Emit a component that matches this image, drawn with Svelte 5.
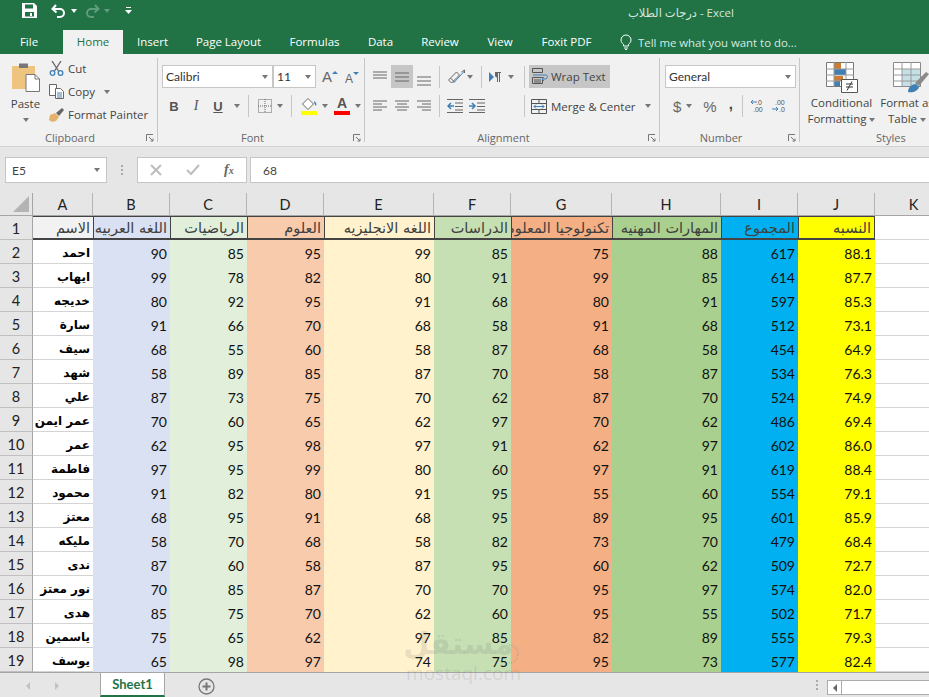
<script>
  const tabs = [
    { name: 'File', width: 63 },
    { name: 'Home', width: 60, active: true },
    { name: 'Insert', width: 59 },
    { name: 'Page Layout', width: 93 },
    { name: 'Formulas', width: 79 },
    { name: 'Data', width: 53 },
    { name: 'Review', width: 66 },
    { name: 'View', width: 54 },
    { name: 'Foxit PDF', width: 79 }
  ];

  const columns = ['A', 'B', 'C', 'D', 'E', 'F', 'G', 'H', 'I', 'J', 'K'];
  const headers = [
    'الاسم', 'اللغه العربيه', 'الرياضيات', 'العلوم', 'اللغه الانجليزيه',
    'الدراسات', 'تكنولوجيا المعلومات', 'المهارات المهنيه', 'المجموع', 'النسبه'
  ];

  const students = [
    ['احمد', 90, 85, 95, 99, 85, 75, 88, 617, 88.1],
    ['ايهاب', 99, 78, 82, 80, 91, 99, 85, 614, 87.7],
    ['خديجه', 80, 92, 95, 91, 68, 80, 91, 597, 85.3],
    ['سارة', 91, 66, 70, 68, 58, 91, 68, 512, 73.1],
    ['سيف', 68, 55, 60, 58, 87, 68, 58, 454, 64.9],
    ['شهد', 58, 89, 85, 87, 70, 58, 87, 534, 76.3],
    ['علي', 87, 73, 75, 70, 62, 87, 70, 524, 74.9],
    ['عمر ايمن', 70, 60, 65, 62, 97, 70, 62, 486, 69.4],
    ['عمر', 62, 95, 98, 97, 91, 62, 97, 602, 86.0],
    ['فاطمة', 97, 95, 99, 80, 60, 97, 91, 619, 88.4],
    ['محمود', 91, 82, 80, 91, 95, 55, 60, 554, 79.1],
    ['معتز', 68, 95, 91, 68, 95, 89, 95, 601, 85.9],
    ['مليكه', 58, 70, 68, 58, 82, 73, 70, 479, 68.4],
    ['ندى', 87, 60, 58, 87, 95, 60, 62, 509, 72.7],
    ['نور معتز', 70, 85, 87, 70, 70, 95, 97, 574, 82.0],
    ['هدى', 85, 75, 70, 62, 60, 95, 55, 502, 71.7],
    ['ياسمين', 75, 65, 62, 97, 85, 82, 89, 555, 79.3],
    ['يوسف', 65, 98, 97, 74, 75, 95, 73, 577, 82.4]
  ];

  function show(value, index) {
    return index === 9 ? value.toFixed(1) : value;
  }
</script>

{#snippet caret()}
  <span class="caret"></span>
{/snippet}

{#snippet launcher()}
  <svg class="launcher" width="8" height="8" viewBox="0 0 8 8" fill="none" stroke="#777">
    <path d="M.5 7V.5H7" /><path d="M3 3l4 4M7 4.500V7H4.500" />
  </svg>
{/snippet}

{#snippet alignLines(ys, xs)}
  <svg width="16" height="20" viewBox="0 0 16 20" stroke="#666" stroke-width="1">
    {#each ys as y, i}
      <line x1={xs[i % xs.length][0]} x2={xs[i % xs.length][1]} y1={y} y2={y} />
    {/each}
  </svg>
{/snippet}

<div class="window">
  <header class="titlebar">
    <div class="quick">
      <svg class="save" width="15" height="15" viewBox="0 0 15 15">
        <path fill="#fff" d="M0 0h12l3 3v12H0z" />
        <path fill="#217346" d="M3 1.500h8v4H3zM3 9h9v4.500H3z" />
        <path fill="#fff" d="M8 10h2v3H8z" />
      </svg>
      <svg class="undo" width="15" height="14" viewBox="0 0 15 14" fill="none" stroke="#fff" stroke-width="2">
        <path d="M5 1L1.500 5 5.500 8.500" /><path d="M2 5h7a4 4 0 0 1 0 8H6" />
      </svg>
      <span class="caret white"></span>
      <svg class="redo" width="15" height="14" viewBox="0 0 15 14" fill="none" stroke="#5f9c7d" stroke-width="2">
        <path d="M10 1l3.500 4-4 3.500" /><path d="M13 5H6a4 4 0 0 0 0 8h3" />
      </svg>
      <span class="caret dim"></span>
      <svg class="customize" width="7" height="8" viewBox="0 0 7 8" fill="#fff">
        <path d="M1 0h5v1H1zM0 3h7L3.500 7z" />
      </svg>
    </div>
    <div class="doc-title">درجات الطلاب - Excel</div>
  </header>

  <nav class="tabs">
    {#each tabs as tab}
      <div class="tab" class:active={tab.active} style="width: {tab.width}px">{tab.name}</div>
    {/each}
    <div class="tell">
      <svg width="12" height="16" viewBox="0 0 12 16" fill="none" stroke="#fff">
        <path d="M3.500 10.500C2 9 1 7.800 1 6a5 5 0 0 1 10 0c0 1.800-1 3-2.500 4.500V12h-5zM4 14h4M5 15.500h2" />
      </svg>
      <span>Tell me what you want to do...</span>
    </div>
  </nav>

  <section class="ribbon">
    <div class="group clipboard">
      <div class="group-body clip-body">
        <div class="paste">
          <svg width="30" height="30" viewBox="0 0 30 30">
            <path fill="#efc47f" d="M1 4h23v23H1z" />
            <path fill="#777" d="M8 1.500h9V6H8z" />
            <path fill="#fff" stroke="#777" d="M15 12.500h9l4.500 4.500v12.500H15z" />
            <path fill="none" stroke="#777" d="M24 12.500V17h4.500" />
          </svg>
          <span>Paste</span>
          {@render caret()}
        </div>
        <div class="clip-actions">
          <div class="clip-row">
            <svg width="15" height="15" viewBox="0 0 15 15" fill="none">
              <path stroke="#666" stroke-width="1.300" d="M3 0l6.500 10M12 0L5.500 10" />
              <circle cx="3.500" cy="12" r="2.300" stroke="#3f7fb5" stroke-width="1.300" />
              <circle cx="11.500" cy="12" r="2.300" stroke="#3f7fb5" stroke-width="1.300" />
            </svg>
            <span>Cut</span>
          </div>
          <div class="clip-row">
            <svg width="15" height="15" viewBox="0 0 15 15" fill="#fff" stroke="#666">
              <path d="M.5.500h7v11h-7z" /><path d="M6.500 4.500h5l3 3v7h-8z" />
              <path stroke="#3f7fb5" d="M8 9h5M8 11h5M8 13h5" />
            </svg>
            <span>Copy</span>
            {@render caret()}
          </div>
          <div class="clip-row">
            <svg width="15" height="15" viewBox="0 0 15 15">
              <path fill="#e4b26d" d="M0 13l1-5 5-2 4 4-3 4-4 1z" />
              <path fill="#666" d="M7 6l6-5 2 2-5 6z" />
            </svg>
            <span>Format Painter</span>
          </div>
        </div>
      </div>
      <div class="group-foot"><i></i><span class="foot-label">Clipboard</span>{@render launcher()}</div>
    </div>

    <div class="group font">
      <div class="group-body">
        <div class="row first">
          <div class="select font-name"><span>Calibri</span>{@render caret()}</div>
          <div class="select font-size"><span>11</span>{@render caret()}</div>
          <div class="grow-btn big">A<b class="up"></b></div>
          <div class="grow-btn small">A<b class="down"></b></div>
        </div>
        <div class="row second">
          <span class="fmt bold">B</span>
          <span class="fmt italic">I</span>
          <span class="fmt under">U</span>
          {@render caret()}
          <span class="sep"></span>
          <svg class="borders" width="14" height="14" viewBox="0 0 14 14" fill="none" stroke="#666" stroke-dasharray="1 1">
            <path d="M.5.500h13v13H.5zM7 0v14M0 7h14" />
          </svg>
          {@render caret()}
          <span class="sep"></span>
          <div class="swatch">
            <svg width="16" height="12" viewBox="0 0 16 12">
              <path fill="#fff" stroke="#666" d="M1.500 6L7 .5 12.500 6 7 11.500z" />
              <path fill="#3f7fb5" d="M13 3c2 1 3 3 2 5-1-1-2-3-2-5z" />
            </svg>
            <b class="bar yellow"></b>
          </div>
          {@render caret()}
          <div class="swatch color-a">
            <span>A</span>
            <b class="bar red"></b>
          </div>
          {@render caret()}
        </div>
      </div>
      <div class="group-foot"><i></i><span class="foot-label">Font</span>{@render launcher()}</div>
    </div>

    <div class="group alignment">
      <div class="group-body">
        <div class="row first">
          <span class="tool">{@render alignLines([5, 8, 11], [[1, 15]])}</span>
          <span class="tool on">{@render alignLines([6, 10, 14], [[1, 15]])}</span>
          <span class="tool">{@render alignLines([10, 14, 18], [[1, 15]])}</span>
          <span class="sep"></span>
          <span class="orient">
            <svg width="19" height="16" viewBox="0 0 18 16" fill="none" stroke="#666">
              <path d="M1 11l8-8 3 3-8 8zM3 9l4 4M14 3l3-2v3" /><path stroke="#3f7fb5" d="M6 14L17 2" />
            </svg>
            {@render caret()}
          </span>
          <span class="sep"></span>
          <span class="rtl">
            <svg width="12" height="10" viewBox="0 0 12 10"><path fill="#3f7fb5" d="M0 0l5 5-5 5z" /><path fill="#666" d="M6 0h6v1h-1v9h-1V1H9v9H8V5.500C6.500 5.500 6 4 6 3z" /></svg>
            {@render caret()}
          </span>
          <span class="sep"></span>
          <div class="wrap-text">
            <svg width="16" height="17" viewBox="0 0 16 17" fill="none" stroke="#555">
              <path d="M.5.500h10v4H.5zM.5 9.500h10v6H.5zM2 12h7M2 14h7" />
              <path stroke="#3f7fb5" d="M1 7h13c2 0 2 4-1 4h-2M12 9l-2 2 2 2" />
            </svg>
            <span>Wrap Text</span>
          </div>
        </div>
        <div class="row second">
          <span class="tool">{@render alignLines([5, 8, 11, 14], [[1, 15], [1, 10]])}</span>
          <span class="tool">{@render alignLines([5, 8, 11, 14], [[1, 15], [3, 13]])}</span>
          <span class="tool">{@render alignLines([5, 8, 11, 14], [[1, 15], [6, 15]])}</span>
          <span class="sep"></span>
          <span class="tool indent">
            <svg width="16" height="14" viewBox="0 0 16 14" fill="none" stroke="#666">
              <path d="M0 .5h16M8 4h8M8 7.500h8M8 11h8M0 13.500h16" />
              <path stroke="#3f7fb5" stroke-width="1.500" d="M7 7H1M4 4L1 7l3 3" />
            </svg>
          </span>
          <span class="tool indent">
            <svg width="16" height="14" viewBox="0 0 16 14" fill="none" stroke="#666">
              <path d="M0 .5h16M8 4h8M8 7.500h8M8 11h8M0 13.500h16" />
              <path stroke="#3f7fb5" stroke-width="1.500" d="M0 7h6M3 4l3 3-3 3" />
            </svg>
          </span>
          <span class="sep wide"></span>
          <div class="merge">
            <svg width="16" height="15" viewBox="0 0 16 15" fill="none" stroke="#555">
              <path d="M.5.500h15v14H.5zM0 4.500h16M0 10.500h16M8 0v4M8 11v4" />
              <path stroke="#3f7fb5" d="M3 7.500h10M5 5.500l-2 2 2 2M11 5.500l2 2-2 2" />
            </svg>
            <span>Merge &amp; Center</span>
            {@render caret()}
          </div>
        </div>
      </div>
      <div class="group-foot"><i></i><span class="foot-label">Alignment</span>{@render launcher()}</div>
    </div>

    <div class="group number">
      <div class="group-body">
        <div class="row first"><div class="select general"><span>General</span>{@render caret()}</div></div>
        <div class="row second">
          <span class="cur">$</span>
          {@render caret()}
          <span class="pct">%</span>
          <span class="comma">,</span>
          <span class="sep"></span>
          <svg class="dec" width="15" height="14" viewBox="0 0 15 14">
            <text x="6" y="6" font-size="7">.0</text><text x="3" y="13" font-size="7">.00</text>
            <path stroke="#3f7fb5" fill="none" d="M7 3H1M3 1L1 3l2 2" />
          </svg>
          <svg class="dec" width="15" height="14" viewBox="0 0 15 14">
            <text x="3" y="6" font-size="7">.00</text><text x="7" y="13" font-size="7">.0</text>
            <path stroke="#3f7fb5" fill="none" d="M0 10h6M4 8l2 2-2 2" />
          </svg>
        </div>
      </div>
      <div class="group-foot"><i></i><span class="foot-label">Number</span>{@render launcher()}</div>
    </div>

    <div class="group styles">
      <div class="group-body style-body">
        <div class="big-tool cond">
          <svg width="32" height="31" viewBox="0 0 32 31">
            <path fill="#fff" stroke="#777" d="M.5.500h27v24H.5z" />
            <path fill="#c97c32" d="M8 1h7v6H8zM8 14h9v5H8z" />
            <path fill="#3f7fb5" d="M8 7h12v6H8zM8 19h6v5H8z" />
            <path stroke="#999" fill="none" d="M8 0v25M20 0v25M0 7h28M0 13h28M0 19h28" />
            <path fill="#fff" stroke="#555" d="M15.500 17.500h16v13h-16z" />
            <path stroke="#333" fill="none" d="M20 22h7M20 25h7M26 19.500l-5 9" />
          </svg>
          <span>Conditional</span>
          <span>Formatting {@render caret()}</span>
        </div>
        <div class="big-tool table">
          <svg width="37" height="31" viewBox="0 0 37 31">
            <path fill="#fff" stroke="#888" d="M.5.500h27v24H.5z" />
            <path fill="#c5dfe6" d="M9 7h18v17H9z" />
            <path stroke="#999" fill="none" d="M9 0v25M18 0v25M0 7h28M0 13h28M0 19h28" />
            <path fill="#8a8a8a" d="M22 21l11-11 3 2-10 12z" />
            <path fill="#3f7fb5" d="M15 30c0-5 4-8 8-8l3 3c-1 4-6 6-11 5z" />
          </svg>
          <span>Format as</span>
          <span>Table {@render caret()}</span>
        </div>
      </div>
      <div class="group-foot styles-foot"><span>Styles</span></div>
    </div>
  </section>

  <section class="formula-bar">
    <div class="name-box"><span>E5</span>{@render caret()}</div>
    <div class="grip"><i></i><i></i><i></i></div>
    <div class="fx-box">
      <svg width="12" height="12" viewBox="0 0 12 12" stroke="#bdbdbd" stroke-width="2"><path d="M1 1l10 10M11 1L1 11" /></svg>
      <svg width="14" height="12" viewBox="0 0 14 12" fill="none" stroke="#bdbdbd" stroke-width="2"><path d="M1 6l4 4 8-9" /></svg>
      <span class="fx">f<small>x</small></span>
    </div>
    <div class="formula-input">68</div>
  </section>

  <section class="sheet">
    <div class="corner"><svg width="16" height="16" viewBox="0 0 16 16"><path fill="#b4b4b4" d="M16 0v16H0z" /></svg></div>
    {#each columns as col}
      <div class="col-head">{col}</div>
    {/each}

    <div class="row-head">1</div>
    {#each headers as text, i}
      <div class="cell title c{i}"><span>{text}</span></div>
    {/each}
    <div class="cell blank"></div>

    {#each students as student, r}
      <div class="row-head">{r + 2}</div>
      {#each student as value, i}
        <div class="cell c{i}" class:name={i === 0}>{i === 0 ? value : show(value, i)}</div>
      {/each}
      <div class="cell blank"></div>
    {/each}
  </section>

  <footer class="sheet-tabs">
    <span class="nav-arrow left"></span>
    <span class="nav-arrow right"></span>
    <div class="sheet-tab">Sheet1</div>
    <svg class="add" width="17" height="17" viewBox="0 0 17 17" fill="none" stroke="#777">
      <circle cx="8.500" cy="8.500" r="7.500" stroke-width="1.300" /><path stroke-width="2" d="M4.500 8.500h8M8.500 4.500v8" />
    </svg>
    <div class="grip foot-grip"><i></i><i></i><i></i></div>
    <div class="hscroll"><span class="scroll-btn"><b></b></span></div>
  </footer>

  <div class="watermark">
    <span class="mark-ar">مستقل</span>
    <span class="mark-en">mostaql.com</span>
    <svg class="mark-ring" width="12" height="20" viewBox="0 0 12 20" fill="none" stroke="#8a8a8a" stroke-width="2" stroke-dasharray="1 1.500">
      <path d="M2 1a9 9 0 0 1 0 18" />
    </svg>
  </div>
</div>

<style>
  :global(body) {
    margin: 0;
    background: #e6e6e6;
  }

  .window {
    position: relative;
    width: 929px;
    height: 697px;
    overflow: hidden;
    display: flex;
    flex-direction: column;
    background: #e6e6e6;
    font-family: 'Open Sans', 'DejaVu Sans', sans-serif;
    font-size: 11.500px;
    color: #444;
  }

  .titlebar {
    height: 30px;
    flex: none;
    display: flex;
    align-items: flex-start;
    background: #217346;
    color: #d5e6dc;
  }

  .quick {
    width: 628px;
    flex: none;
    display: flex;
    align-items: center;
    padding: 3px 0 0 22px;
    box-sizing: border-box;
  }

  .undo { margin-left: 14px; }
  .redo { margin-left: 8px; }
  .customize { margin-left: 15px; }

  .doc-title {
    padding-top: 5px;
    font-size: 11.500px;
    white-space: nowrap;
  }

  .caret {
    display: inline-block;
    width: 0;
    height: 0;
    margin-left: 5px;
    border-left: 3.500px solid transparent;
    border-right: 3.500px solid transparent;
    border-top: 4px solid #777;
  }

  .caret.white { border-top-color: #fff; }
  .caret.dim { border-top-color: #5f9c7d; margin-left: 4px; }

  .tabs {
    height: 24px;
    flex: none;
    display: flex;
    background: #217346;
    color: #fff;
    font-size: 11.500px;
  }

  .tab {
    display: flex;
    align-items: center;
    justify-content: center;
    flex: none;
    padding-bottom: 1px;
    box-sizing: border-box;
  }

  .tab:first-child { padding-right: 5px; }

  .tab.active {
    background: #f1f1f1;
    color: #217346;
  }

  .tell {
    display: flex;
    align-items: center;
    gap: 6px;
    margin-left: 14px;
    color: #d9e9e0;
    white-space: nowrap;
    font-size: 11.400px;
  }

  .ribbon {
    height: 92px;
    flex: none;
    display: flex;
    background: #f1f1f1;
    border-bottom: 1px solid #d2d2d2;
  }

  .group {
    flex: none;
    display: flex;
    flex-direction: column;
    box-sizing: border-box;
    border-right: 1px solid #c6c6c6;
    margin: 4px 0;
  }

  .clipboard { width: 158px; }
  .font { width: 207px; }
  .alignment { width: 295px; }
  .number { width: 140px; }
  .styles { width: 129px; border-right: 0; }

  .group-body {
    flex: 1;
    display: flex;
    flex-direction: column;
    padding-top: 7px;
    min-height: 0;
  }

  .group-foot {
    height: 15px;
    margin-bottom: -3px;
    display: grid;
    grid-template-columns: 1fr auto 1fr;
    align-items: center;
    color: #666;
    font-size: 11px;
    padding-right: 3px;
  }

  .foot-label { margin-right: 14px; }
  .launcher { justify-self: end; }

  .styles-foot {
    grid-template-columns: 1fr;
    justify-items: start;
    padding-left: 76px;
  }

  .clip-body {
    flex-direction: row;
    padding-top: 0;
  }

  .paste {
    width: 49px;
    display: flex;
    flex-direction: column;
    align-items: center;
    padding: 4px 0 0 2px;
    box-sizing: border-box;
  }

  .paste span { margin-top: 4px; }
  .paste .caret { margin: 7px 0 0; }

  .clip-actions {
    display: flex;
    flex-direction: column;
    padding-top: 3px;
    gap: 8px;
  }

  .clip-row {
    height: 15px;
    display: flex;
    align-items: center;
    gap: 4px;
    white-space: nowrap;
  }

  .row {
    display: flex;
    align-items: center;
  }

  .row.first { height: 23px; }
  .row.second { height: 22px; margin-top: 7px; }

  .font .row { padding-left: 4px; }
  .font .second { padding-left: 5px; }

  .select {
    height: 23px;
    box-sizing: border-box;
    background: #fff;
    border: 1px solid #c6c6c6;
    display: flex;
    align-items: center;
    justify-content: space-between;
    padding: 0 4px 0 3px;
    color: #333;
  }

  .font-name { width: 111px; font-family: Lato, sans-serif; font-size: 12px; }
  .font-size { width: 43px; font-family: Lato, sans-serif; font-size: 12px; }
  .general { width: 131px; margin-left: 5px; font-family: Lato, sans-serif; font-size: 12px; }

  .grow-btn {
    display: flex;
    font-family: 'Liberation Sans', sans-serif;
    color: #666;
    align-items: flex-end;
    line-height: 1;
  }

  .grow-btn.big { font-size: 15px; margin-left: 6px; width: 23px; }
  .grow-btn.small { font-size: 12px; margin-top: 3px; }

  .up, .down {
    width: 0;
    height: 0;
    margin-bottom: 10px;
    border-left: 3px solid transparent;
    border-right: 3px solid transparent;
  }

  .up { border-bottom: 3px solid #3f7fb5; }
  .down { border-top: 3px solid #3f7fb5; }

  .fmt {
    width: 22px;
    text-align: center;
    font-family: 'Liberation Sans', sans-serif;
    font-size: 13px;
    color: #555;
  }

  .bold { font-weight: bold; }
  .italic { font-style: italic; font-family: 'Liberation Serif', serif; font-size: 14px; }
  .under { text-decoration: underline; font-weight: bold; }

  .sep {
    width: 1px;
    height: 22px;
    flex: none;
    margin: 0 8px;
    background: #c6c6c6;
  }

  .borders { margin-left: 1px; }

  .swatch {
    width: 16px;
    display: flex;
    flex-direction: column;
    align-items: center;
    margin-left: 1px;
  }

  .color-a { margin-left: 6px; }

  .color-a span {
    font-family: 'Liberation Sans', sans-serif;
    font-size: 14px;
    line-height: 13px;
    font-weight: bold;
    color: #555;
  }

  .bar {
    width: 16px;
    height: 4px;
    margin-top: 1px;
  }

  .yellow { background: #ffff00; }
  .red { background: #ff0000; }

  .alignment .row { padding-left: 4px; }
  .alignment .sep { margin: 0 7px 0 4px; }
  .alignment .sep.wide { margin: 0 6px 0 33px; }

  .tool {
    width: 22px;
    height: 23px;
    flex: none;
    display: flex;
    align-items: center;
    justify-content: center;
  }

  .tool.on { background: #c6c6c6; }
  .tool.indent { justify-content: flex-start; }

  .orient, .rtl {
    flex: none;
    display: flex;
    align-items: center;
  }

  .orient { width: 30px; }
  .rtl { width: 31px; }
  .orient .caret { margin-left: 1px; }
  .rtl .caret { margin-left: 7px; }

  .wrap-text {
    width: 81px;
    height: 23px;
    margin-left: -3px;
    display: flex;
    align-items: center;
    gap: 3px;
    padding-left: 3px;
    box-sizing: border-box;
    background: #c6c6c6;
    white-space: nowrap;
    color: #444;
  }

  .merge {
    display: flex;
    align-items: center;
    gap: 4px;
    white-space: nowrap;
  }

  .merge .caret { margin-left: 5px; }

  .number .second { padding-left: 13px; }

  .cur, .pct {
    font-family: 'Liberation Sans', sans-serif;
    font-size: 15px;
    color: #666;
  }

  .pct { margin-left: 11px; }

  .comma {
    font-family: 'Liberation Sans', sans-serif;
    font-weight: bold;
    font-size: 15px;
    margin: -6px 0 0 12px;
  }

  .number .sep { margin: 0 7px 0 9px; }
  .dec { margin-right: 7px; }
  .dec text { fill: #555; font-family: 'Liberation Sans', sans-serif; }

  .style-body {
    flex-direction: row;
    padding-top: 4px;
  }

  .big-tool {
    display: flex;
    flex-direction: column;
    align-items: center;
    white-space: nowrap;
    line-height: 16px;
    flex: none;
  }

  .big-tool svg { margin-bottom: 2px; }
  .big-tool .caret { margin-left: 0; vertical-align: middle; }
  .cond { width: 82px; padding-left: 1px; box-sizing: border-box; }
  .table { width: 54px; margin-left: -2px; }
  .table svg { margin-left: 8px; }

  .formula-bar {
    height: 26px;
    flex: none;
    display: flex;
    align-items: stretch;
    margin-top: 10px;
    padding-left: 5px;
    color: #444;
    font-family: Lato, sans-serif;
    font-size: 12px;
  }

  .name-box {
    width: 102px;
    box-sizing: border-box;
    background: #fff;
    border: 1px solid #c6c6c6;
    display: flex;
    align-items: center;
    justify-content: space-between;
    padding: 0 6px;
  }

  .grip {
    width: 30px;
    flex: none;
    display: flex;
    flex-direction: column;
    align-items: center;
    justify-content: center;
    gap: 2px;
  }

  .grip i {
    width: 2px;
    height: 2px;
    background: #aaa;
  }

  .fx-box {
    width: 110px;
    box-sizing: border-box;
    background: #fff;
    border: 1px solid #c6c6c6;
    display: flex;
    align-items: center;
    gap: 24px;
    padding-left: 12px;
  }

  .fx {
    font-family: 'Liberation Serif', serif;
    font-style: italic;
    font-weight: bold;
    font-size: 14px;
    color: #666;
  }

  .fx small { font-size: 10px; }

  .formula-input {
    flex: 1;
    margin-left: 3px;
    background: #fff;
    border: 1px solid #c6c6c6;
    border-right: 0;
    display: flex;
    align-items: center;
    padding-left: 12px;
  }

  .sheet {
    margin-top: 10px;
    flex: none;
    display: grid;
    grid-template-columns: 33px 60px 77px 77px 77px 110px 77px 101px 109px 77px 77px 78px;
    grid-template-rows: 23px repeat(19, 24px);
    font-family: Lato, sans-serif;
    font-size: 14px;
    color: #111;
    background: #fff;
    height: 479px;
    width: 953px;
  }

  .corner {
    background: #e6e6e6;
    display: flex;
    align-items: flex-end;
    justify-content: flex-end;
    padding: 0 3px 3px 0;
    box-sizing: border-box;
    border-right: 1px solid #a6a6a6;
    border-bottom: 1px solid #a6a6a6;
  }

  .col-head {
    background: #e6e6e6;
    display: flex;
    align-items: center;
    justify-content: center;
    box-sizing: border-box;
    border-right: 1px solid #b4b4b4;
    border-bottom: 1px solid #a6a6a6;
    color: #222;
    font-size: 14.500px;
  }

  .row-head {
    background: #e6e6e6;
    display: flex;
    align-items: center;
    justify-content: center;
    box-sizing: border-box;
    padding-top: 2px;
    border-right: 1px solid #a6a6a6;
    border-bottom: 1px solid #c0c0c0;
    color: #222;
    font-size: 14.500px;
  }

  .cell {
    box-sizing: border-box;
    display: flex;
    align-items: center;
    justify-content: flex-end;
    padding: 3px 3px 0 0;
    overflow: hidden;
    white-space: nowrap;
  }

  .cell.title {
    direction: rtl;
    justify-content: flex-start;
    padding: 0 3px 0 0;
    font-family: 'DejaVu Sans', sans-serif;
    font-size: 14.500px;
    color: #404040;
    border-top: 1px solid #444;
    border-bottom: 2px solid #444;
    border-left: 1px solid #444;
  }

  .cell.name {
    direction: rtl;
    justify-content: flex-start;
    font-family: 'DejaVu Sans', sans-serif;
    font-weight: bold;
    font-size: 12px;
    color: #000;
    border-bottom: 1px solid #d4d4d4;
  }

  .cell.blank { border-bottom: 1px solid #d4d4d4; }

  .title.c0 { background: #f2f2f2; border-left: 0; }
  .c1 { background: #d9e1f2; }
  .c2 { background: #e2efda; }
  .c3 { background: #f8cbad; }
  .c4 { background: #fff2cc; }
  .c5 { background: #c6e0b4; }
  .c6 { background: #f4b084; }
  .c7 { background: #a9d08e; }
  .c8 { background: #00b0f0; }
  .c9 { background: #ffff00; }
  .title.c9 { border-right: 1px solid #444; }

  .sheet-tabs {
    flex: 1;
    display: flex;
    align-items: flex-start;
    background: #e6e6e6;
    border-top: 1px solid #a6a6a6;
  }

  .nav-arrow {
    width: 0;
    height: 0;
    margin-top: 9px;
    border-top: 4px solid transparent;
    border-bottom: 4px solid transparent;
  }

  .nav-arrow.left { margin-left: 26px; border-right: 4px solid #c2c2c2; }
  .nav-arrow.right { margin-left: 25px; border-left: 4px solid #c2c2c2; }

  .sheet-tab {
    width: 65px;
    height: 24px;
    margin-left: 41px;
    box-sizing: border-box;
    background: #fff;
    border-left: 1px solid #a6a6a6;
    border-right: 1px solid #a6a6a6;
    border-bottom: 2px solid #217346;
    color: #217346;
    font-family: Lato, sans-serif;
    font-weight: bold;
    font-size: 13px;
    display: flex;
    align-items: center;
    justify-content: center;
  }

  .add { margin: 5px 0 0 33px; }

  .foot-grip {
    width: 9px;
    height: 24px;
    margin-left: 597px;
  }

  .hscroll {
    flex: 1;
    height: 15px;
    margin: 7px 0 0 6px;
    background: #fff;
    border: 1px solid #ababab;
    border-right: 0;
    box-sizing: border-box;
  }

  .scroll-btn {
    width: 14px;
    height: 100%;
    display: flex;
    align-items: center;
    justify-content: center;
    border-right: 1px solid #ababab;
    box-sizing: border-box;
  }

  .scroll-btn b {
    width: 0;
    height: 0;
    border-top: 4px solid transparent;
    border-bottom: 4px solid transparent;
    border-right: 4px solid #666;
  }

  /* faint site stamp over the bottom of the sheet */
  .watermark {
    position: absolute;
    left: 405px;
    top: 624px;
    width: 116px;
    display: flex;
    flex-direction: column;
    align-items: flex-end;
    color: rgba(110, 110, 110, 0.16);
    pointer-events: none;
  }

  .mark-ar {
    font-family: 'DejaVu Sans', sans-serif;
    font-weight: bold;
    font-size: 30px;
    line-height: 40px;
    padding-right: 8px;
  }

  .mark-en {
    font-family: 'Open Sans', sans-serif;
    font-size: 19px;
    line-height: 18px;
    white-space: nowrap;
  }

  .mark-ring {
    position: absolute;
    right: 2px;
    top: 20px;
    opacity: 0.4;
  }
</style>
